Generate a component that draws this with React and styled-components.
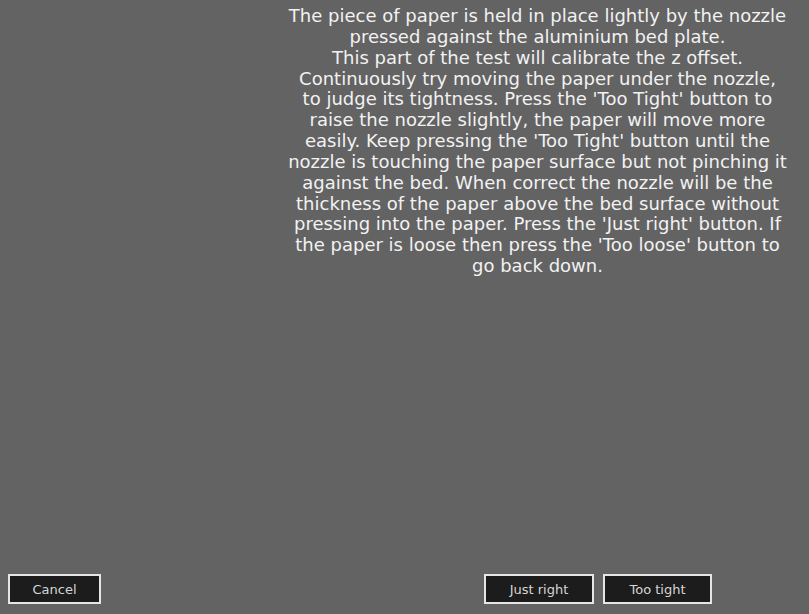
import React from 'react';
import styled, { createGlobalStyle } from 'styled-components';

const GlobalStyle = createGlobalStyle`
  html, body {
    margin: 0;
    padding: 0;
    background: #636363;
  }
  body {
    font-family: 'DejaVu Sans', sans-serif;
  }
`;

const Screen = styled.div`
  width: 809px;
  height: 614px;
  display: flex;
  flex-direction: column;
  background: #636363;
  overflow: hidden;
`;

const Body = styled.div`
  flex: 1;
  display: grid;
  grid-template-columns: 266px 1fr;
`;

const Instructions = styled.p`
  grid-column: 2;
  margin: 6px 0 0;
  color: #f2f2f2;
  font-size: 18px;
  line-height: 20.85px;
  text-align: center;
  white-space: pre-line;
`;

const ButtonBar = styled.div`
  display: flex;
  align-items: center;
  padding: 0 0 10px 8px;
`;

const Spacer = styled.div`
  flex: 1;
`;

const Button = styled.button`
  box-sizing: border-box;
  width: ${p => p.$width}px;
  height: 30px;
  margin-right: ${p => p.$gap || 0}px;
  background: #1c1c1c;
  border: 2px solid #e6e6e6;
  color: #d6d6d6;
  font-family: 'DejaVu Sans', sans-serif;
  font-size: 13px;
  padding: 0;
  cursor: pointer;
`;

const text = `The piece of paper is held in place lightly by the nozzle
pressed against the aluminium bed plate.
This part of the test will calibrate the z offset.
Continuously try moving the paper under the nozzle,
to judge its tightness. Press the 'Too Tight' button to
raise the nozzle slightly, the paper will move more
easily. Keep pressing the 'Too Tight' button until the
nozzle is touching the paper surface but not pinching it
against the bed. When correct the nozzle will be the
thickness of the paper above the bed surface without
pressing into the paper. Press the 'Just right' button. If
the paper is loose then press the 'Too loose' button to
go back down.`;

export default function App() {
  return (
    <Screen>
      <GlobalStyle />
      <Body>
        <Instructions>{text}</Instructions>
      </Body>
      <ButtonBar>
        <Button $width={93}>Cancel</Button>
        <Spacer />
        <Button $width={110} $gap={9}>Just right</Button>
        <Button $width={109} $gap={97}>Too tight</Button>
      </ButtonBar>
    </Screen>
  );
}
